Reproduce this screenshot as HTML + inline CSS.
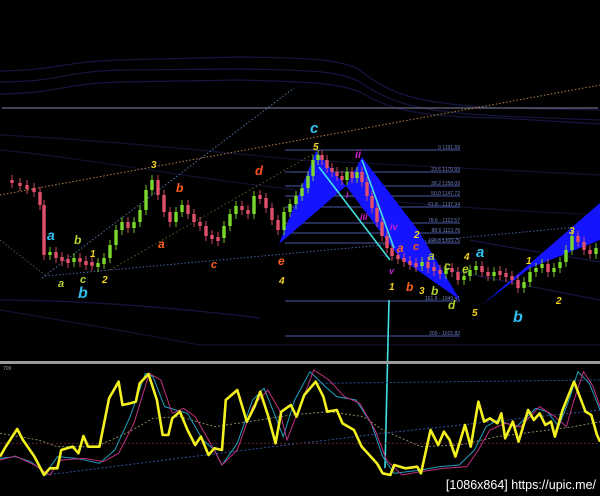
<!DOCTYPE html>
<html><head><meta charset="utf-8">
<style>
html,body{margin:0;padding:0;background:#000;}
svg{display:block}
text{font-family:"Liberation Sans",sans-serif;}
.l{font-style:italic;font-weight:bold;}
.f{font-size:5px;fill:#7080c0;}
</style></head>
<body>
<svg id="s" width="600" height="496" viewBox="0 0 600 496" xmlns="http://www.w3.org/2000/svg">
<rect width="600" height="496" fill="#000"/>
<g fill="none" stroke="#151540" stroke-width="1.2">
<path d="M0,71 C60,70 60,62 120,60 L240,57 C320,58 340,60 360,70 C390,95 420,104 500,108 L600,110"/>
<path d="M0,82 C60,82 60,72 120,70 L240,69 C320,70 340,72 360,82 C390,103 420,112 500,116 L600,120"/>
<path d="M0,94 C60,93 60,84 120,82 L240,80 C320,82 340,84 360,92 C390,110 420,117 500,118 L600,124"/>
<path d="M0,310 C60,320 120,330 200,345 L600,345" stroke="#101030"/>
<path d="M0,300 C80,300 180,308 260,318"/>
<path d="M380,255 C450,270 520,285 600,300"/>
<path d="M470,240 C520,250 560,255 600,262"/>
<path d="M0,135 C100,140 200,150 300,160 L600,175" stroke="#111130"/>
<path d="M0,150 C100,160 200,180 300,190 C400,205 500,210 600,215" stroke="#111130"/>
</g>
<line x1="2" y1="108" x2="598" y2="108" stroke="#6a6a80" stroke-width="1.2"/>
<line x1="0" y1="195" x2="600" y2="85" stroke="#b08040" stroke-width="1" stroke-dasharray="1.5,2"/>
<line x1="42" y1="278" x2="294" y2="88" stroke="#5070a0" stroke-width="1" stroke-dasharray="1.5,2"/>
<line x1="45" y1="276" x2="600" y2="225" stroke="#4060a0" stroke-width="1" stroke-dasharray="1.5,2"/>
<line x1="0" y1="240" x2="45" y2="275" stroke="#505050" stroke-width="1" stroke-dasharray="1.5,2"/>
<line x1="110" y1="270" x2="320" y2="150" stroke="#707030" stroke-width="0.8" stroke-dasharray="1.5,2.5"/>
<g stroke="#4a58a8" stroke-width="1">
<line x1="285" y1="150" x2="460" y2="150"/>
<line x1="285" y1="172" x2="460" y2="172"/>
<line x1="285" y1="186" x2="460" y2="186"/>
<line x1="285" y1="196" x2="460" y2="196"/>
<line x1="285" y1="207" x2="460" y2="207"/>
<line x1="285" y1="223" x2="460" y2="223"/>
<line x1="285" y1="233" x2="460" y2="233"/>
<line x1="285" y1="243" x2="460" y2="243"/>
<line x1="285" y1="301" x2="460" y2="301"/>
<line x1="285" y1="336" x2="460" y2="336"/>
</g>
<g class="f" text-anchor="end">
<text x="460" y="149">0  1191.69</text>
<text x="460" y="171">23.6  1170.93</text>
<text x="460" y="185">38.2  1158.09</text>
<text x="460" y="195">50.0  1147.72</text>
<text x="460" y="206">61.8 - 1137.34</text>
<text x="460" y="222">78.6 - 1122.57</text>
<text x="460" y="232">88.6  1113.78</text>
<text x="460" y="242">100.0  1103.75</text>
<text x="460" y="300">161.8 - 1049.41</text>
<text x="460" y="335">200 - 1015.82</text>
</g>
<g fill="#1414ff">
<polygon points="279,244 316,151 346,186"/>
<polygon points="346,186 362,157 418,230 460,300 400,258"/>
<polygon points="482,305 600,203 600,240 530,268"/>
</g>
<g id="candles"></g>
<g stroke="#40e0e0" stroke-width="1.6" fill="none">
<line x1="319" y1="167" x2="390" y2="260"/>
<line x1="362" y1="160" x2="394" y2="248"/>
<line x1="389" y1="300" x2="385" y2="468"/>
</g>
<g class="l">
<text x="310" y="133" font-size="15" fill="#30c0f0">c</text>
<text x="313" y="150" font-size="10" fill="#f0d020">5</text>
<text x="355" y="158" font-size="11" fill="#d020d0">ii</text>
<text x="151" y="168" font-size="10" fill="#f0d020">3</text>
<text x="255" y="175" font-size="13" fill="#ff5020">d</text>
<text x="176" y="192" font-size="12" fill="#ff6020">b</text>
<text x="47" y="240" font-size="14" fill="#30c0f0">a</text>
<text x="74" y="244" font-size="12" fill="#b0d030">b</text>
<text x="90" y="257" font-size="10" fill="#f0d020">1</text>
<text x="158" y="248" font-size="12" fill="#ff6020">a</text>
<text x="211" y="268" font-size="11" fill="#ff6020">c</text>
<text x="278" y="265" font-size="12" fill="#ff6020">e</text>
<text x="279" y="284" font-size="10" fill="#f0d020">4</text>
<text x="58" y="287" font-size="11" fill="#b0d030">a</text>
<text x="80" y="283" font-size="11" fill="#b0d030">c</text>
<text x="78" y="298" font-size="16" fill="#30c0f0">b</text>
<text x="102" y="283" font-size="10" fill="#f0d020">2</text>
<text x="346" y="198" font-size="9" fill="#d020d0">i</text>
<text x="360" y="220" font-size="9" fill="#d020d0">iii</text>
<text x="390" y="230" font-size="9" fill="#d020d0">iv</text>
<text x="389" y="274" font-size="9" fill="#d020d0">v</text>
<text x="414" y="238" font-size="10" fill="#f0d020">2</text>
<text x="413" y="250" font-size="11" fill="#ff5020">c</text>
<text x="397" y="252" font-size="12" fill="#ff6020">a</text>
<text x="428" y="260" font-size="12" fill="#b0d030">a</text>
<text x="444" y="270" font-size="12" fill="#b0d030">c</text>
<text x="462" y="273" font-size="12" fill="#b0d030">e</text>
<text x="464" y="260" font-size="10" fill="#f0d020">4</text>
<text x="476" y="257" font-size="15" fill="#30c0f0">a</text>
<text x="389" y="290" font-size="10" fill="#f0d020">1</text>
<text x="406" y="291" font-size="12" fill="#ff6020">b</text>
<text x="419" y="294" font-size="10" fill="#f0d020">3</text>
<text x="431" y="295" font-size="12" fill="#b0d030">b</text>
<text x="448" y="309" font-size="12" fill="#b0d030">d</text>
<text x="472" y="316" font-size="10" fill="#f0d020">5</text>
<text x="513" y="322" font-size="16" fill="#30c0f0">b</text>
<text x="526" y="264" font-size="10" fill="#f0d020">1</text>
<text x="556" y="304" font-size="10" fill="#f0d020">2</text>
<text x="569" y="234" font-size="10" fill="#f0d020">3</text>
</g>
<rect x="0" y="361" width="600" height="3" fill="#9a9a9a"/>
<text x="3" y="370" font-size="5" fill="#999">709</text>
<g transform="translate(0,350) scale(0.3827,0.3333)" fill="none">
<path vector-effect="non-scaling-stroke" stroke="#8a8a60" stroke-width="1" stroke-dasharray="2,2" d="M0,250 L100,270 150,290 250,290 330,250 400,205 470,200 560,230 650,215 760,195 860,185 950,200 1000,240 1050,265 1100,290 1200,285 1300,260 1400,245 1500,230 1568,215"/>
<path vector-effect="non-scaling-stroke" stroke="#3050a0" stroke-width="1" stroke-dasharray="2,2" d="M120,375 L500,320 1000,250 1568,180"/>
<path vector-effect="non-scaling-stroke" stroke="#3050a0" stroke-width="1" stroke-dasharray="2,2" d="M830,100 L1568,90"/>
<path vector-effect="non-scaling-stroke" stroke="#602030" stroke-width="1" stroke-dasharray="2,2" d="M0,280 L1568,280"/>
<path vector-effect="non-scaling-stroke" stroke="#20a0c0" stroke-width="1" d="M0,325 L40,320 80,335 120,370 150,320 200,325 260,340 300,300 340,200 380,70 400,80 430,170 460,180 490,190 530,270 560,300 580,345 620,280 660,150 690,115 720,200 740,260 770,150 810,65 850,110 880,140 930,150 970,220 1000,320 1030,370 1100,360 1150,350 1200,345 1240,300 1270,230 1300,210 1350,230 1400,175 1430,185 1460,230 1490,140 1510,65 1540,100 1568,180"/>
<path vector-effect="non-scaling-stroke" stroke="#c03080" stroke-width="1" d="M0,330 L40,318 90,345 130,375 160,330 220,325 270,335 310,310 350,220 390,70 420,90 450,190 480,175 510,200 550,280 580,345 620,300 660,170 700,120 730,180 750,270 790,150 820,60 860,90 900,140 940,160 980,240 1010,330 1050,375 1100,365 1160,355 1220,350 1250,300 1280,240 1320,220 1360,230 1410,170 1450,200 1480,230 1500,150 1525,65 1550,110 1568,170"/>
<path vector-effect="non-scaling-stroke" stroke="#f2f01e" stroke-width="2.6" stroke-linejoin="round" d="M0,320 L15,290 45,237 60,270 90,320 115,375 130,355 150,355 160,300 190,290 205,310 218,258 230,290 260,290 265,260 285,145 310,95 320,165 340,160 355,155 365,100 388,72 410,150 425,255 440,255 450,205 470,185 490,240 510,285 525,260 545,315 560,295 580,300 590,150 620,120 645,215 665,170 680,125 700,195 720,280 735,185 760,165 775,200 795,135 825,95 845,140 855,185 880,180 895,220 925,240 945,290 985,340 1000,370 1020,375 1030,345 1060,355 1090,350 1100,370 1125,240 1145,285 1160,245 1175,270 1190,320 1215,225 1230,290 1250,155 1265,215 1280,205 1300,220 1310,190 1320,265 1340,215 1355,275 1380,180 1395,210 1410,190 1425,225 1440,215 1450,260 1470,180 1500,95 1530,185 1545,195 1560,255 1568,275"/>
</g>
<rect x="438" y="476" width="162" height="17" fill="#000"/>
<text x="596" y="489" font-size="12.5" fill="#fff" text-anchor="end">[1086x864] https://upic.me/</text>
</svg>
<script>
var pts=[[5,180],[12,183],[20,186],[27,188],[34,192],[40,205],[44,255],[50,252],[56,258],[62,260],[68,262],[74,258],[80,262],[86,262],[92,266],[98,264],[104,258],[110,245],[116,230],[122,222],[128,228],[134,222],[140,210],[146,190],[152,180],[158,195],[164,212],[170,222],[176,212],[182,205],[188,214],[194,222],[200,226],[206,236],[212,238],[218,238],[224,226],[230,214],[236,206],[242,210],[248,214],[254,196],[260,198],[266,208],[272,220],[278,230],[284,212],[290,204],[296,196],[302,188],[308,176],[313,160],[318,155],[322,160],[327,168],[332,172],[337,176],[342,180],[347,172],[352,178],[357,172],[362,182],[367,196],[372,208],[377,222],[382,236],[387,248],[392,256],[398,258],[404,262],[410,264],[416,266],[422,262],[428,268],[434,270],[440,274],[446,268],[452,272],[458,280],[464,276],[470,270],[476,266],[482,272],[488,276],[494,272],[500,274],[506,276],[512,280],[518,288],[524,282],[530,272],[536,268],[542,264],[548,272],[554,268],[560,262],[566,250],[572,236],[578,242],[584,250],[590,254],[596,248]];
var g=document.getElementById('candles'),h='';
for(var i=1;i<pts.length;i++){var x=pts[i][0],o=pts[i-1][1],c=pts[i][1];var up=c<o;var col=up?'#7cd82a':'#e0506a';var t=Math.min(o,c),b=Math.max(o,c);if(b-t<3){t-=1;b=t+4;}
h+='<line x1="'+x+'" y1="'+(t-5)+'" x2="'+x+'" y2="'+(b+5)+'" stroke="'+col+'" stroke-width="0.9"/>';
h+='<rect x="'+(x-1.7)+'" y="'+t+'" width="3.4" height="'+(b-t)+'" fill="'+col+'"/>';}
g.innerHTML=h;
</script>
</body></html>
